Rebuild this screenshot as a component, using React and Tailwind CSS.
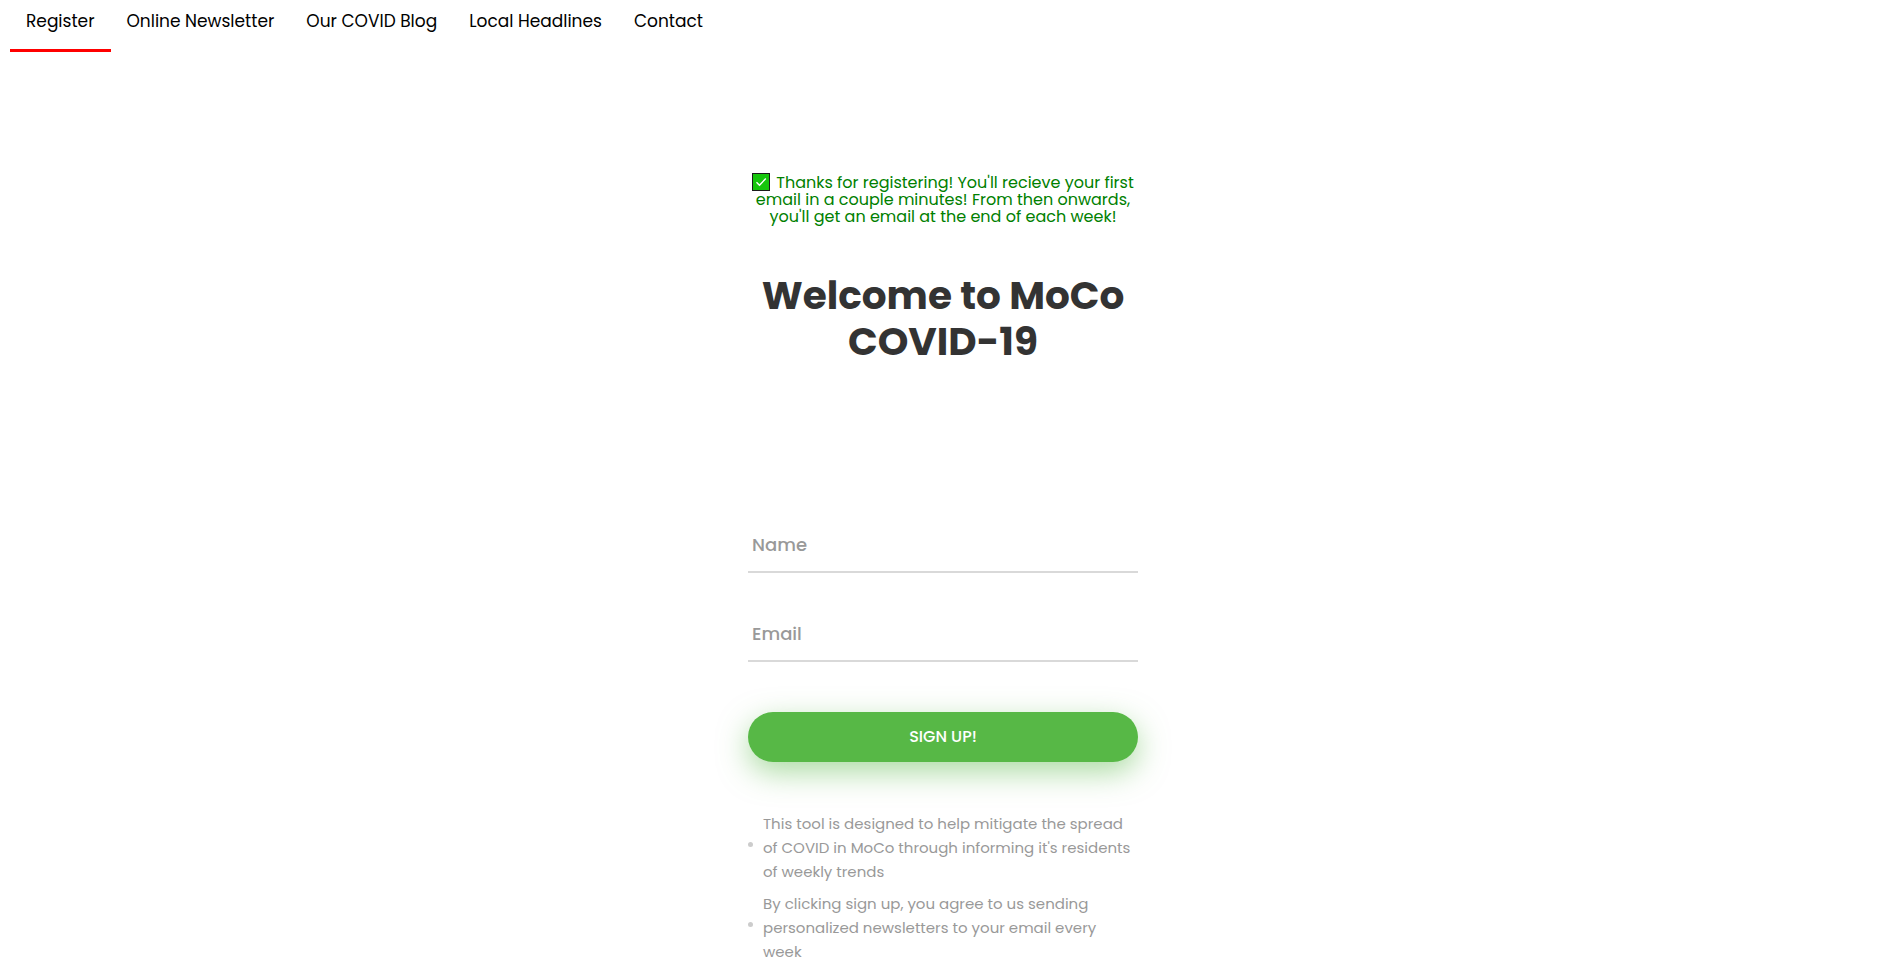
import { useState } from "react";

const NAV_LINKS = ["Register", "Online Newsletter", "Our COVID Blog", "Local Headlines", "Contact"];

const NOTES = [
  ["This tool is designed to help mitigate the spread", "of COVID in MoCo through informing it's residents", "of weekly trends"],
  ["By clicking sign up, you agree to us sending", "personalized newsletters to your email every", "week"],
];

function NavBar({ active }) {
  return (
    <nav className="flex px-[10px] text-[17px] leading-[24px] text-black">
      {NAV_LINKS.map((label) => (
        <a
          key={label}
          href="#"
          className={`whitespace-nowrap border-b-[3px] px-4 pt-[9px] pb-4 ${label === active ? "border-[#ff0000]" : "border-transparent"}`}
        >
          {label}
        </a>
      ))}
    </nav>
  );
}

function CheckMark() {
  return (
    <svg viewBox="0 0 18 18" className="-my-1 mr-[6px] inline-block size-[18px] align-[1px]" aria-hidden="true">
      <rect x="0.5" y="0.5" width="17" height="17" fill="#16c60c" stroke="#1b1b1b" />
      <path d="M4.5 9.2 7.5 12.2 13.8 5.5" fill="none" stroke="#fff" strokeWidth="1.4" />
    </svg>
  );
}

function Field({ id, type, label, value, onChange }) {
  return (
    <div className="mb-8 border-b-2 border-[#d9d9d9]">
      <label htmlFor={id} className="sr-only">{label}</label>
      <input
        id={id}
        type={type}
        placeholder={label}
        value={value}
        onChange={(e) => onChange(e.target.value)}
        className="block h-[55px] w-full bg-transparent px-1 pt-[2px] text-[18px] font-medium text-[#555555] outline-none placeholder:text-[#999999]"
      />
    </div>
  );
}

export default function App() {
  const [name, setName] = useState("");
  const [email, setEmail] = useState("");

  return (
    <div className="bg-white font-[Poppins,Inter,sans-serif]">
      <NavBar active="Register" />
      <main className="flex justify-center pt-[122px] pr-[7px]">
        <form className="w-[390px] max-w-full" onSubmit={(e) => e.preventDefault()}>
          <p className="text-center text-[16px] leading-[17px] whitespace-nowrap text-[#008000]">
            <CheckMark />
            Thanks for registering! You'll recieve your first
            <br />
            email in a couple minutes! From then onwards,
            <br />
            you'll get an email at the end of each week!
          </p>
          <h1 className="mt-12 mb-[151px] text-center text-[39px] leading-[46px] font-bold text-[#333333]">
            Welcome to MoCo
            <br />
            COVID-19
          </h1>
          <Field id="name" type="text" label="Name" value={name} onChange={setName} />
          <Field id="email" type="email" label="Email" value={email} onChange={setEmail} />
          <button
            type="submit"
            className="mt-[18px] h-[50px] w-full rounded-full bg-[#57b846] text-[16px] font-medium text-white shadow-[0_10px_30px_0_rgba(87,184,70,0.5)]"
          >
            SIGN UP!
          </button>
          <ul className="mt-[50px] space-y-2 text-[15px] leading-[24px] text-[#999999]">
            {NOTES.map((lines) => (
              <li key={lines[0]} className="flex items-center gap-[10px] whitespace-nowrap">
                <span className="mb-2 size-[5px] shrink-0 rounded-full bg-[#cccccc]" />
                <span>
                  {lines.map((line) => (
                    <span key={line} className="block">{line}</span>
                  ))}
                </span>
              </li>
            ))}
          </ul>
        </form>
      </main>
    </div>
  );
}
